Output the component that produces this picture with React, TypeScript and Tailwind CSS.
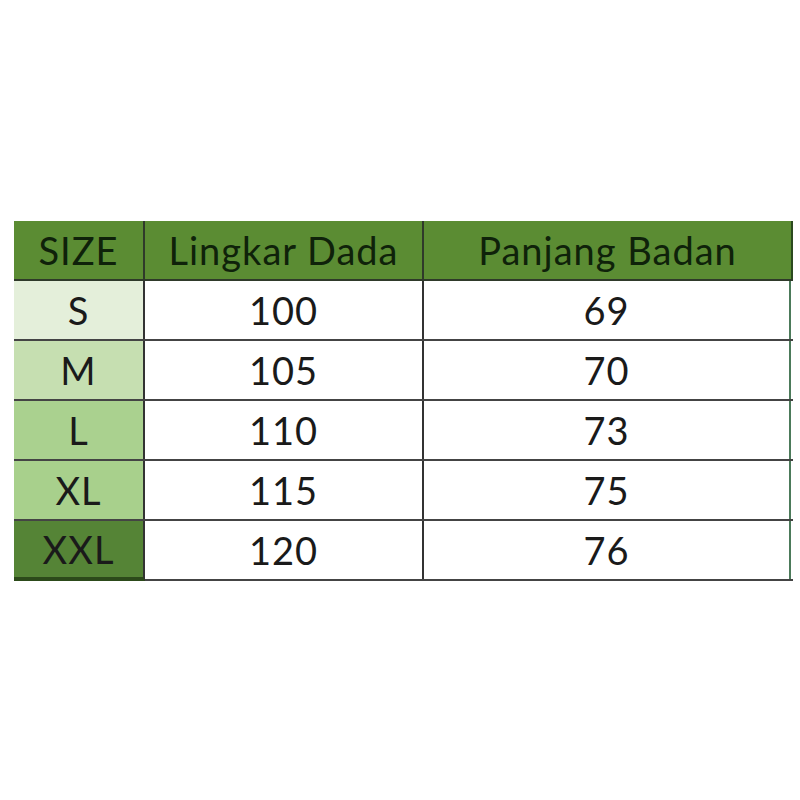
const rows = [
  { size: "S", chest: "100", length: "69", bg: "bg-[#e4efda]" },
  { size: "M", chest: "105", length: "70", bg: "bg-[#c6dfb1]" },
  { size: "L", chest: "110", length: "73", bg: "bg-[#aad18f]" },
  { size: "XL", chest: "115", length: "75", bg: "bg-[#a8d08c]" },
  { size: "XXL", chest: "120", length: "76", bg: "bg-[#558436]" },
];

export default function App() {
  return (
    <div className="h-[800px] w-[800px] bg-white pl-[14px] pt-[221px] font-['Lato',sans-serif]">
      <div className="w-[779px]">
        <div className="flex h-[60px] border-b-2 border-[#2f3a2a] bg-[#5b8c33] text-[38px] tracking-[1px] text-[#0f220a]">
          <div className="flex w-[131px] items-center justify-center border-r-2 border-[#2f3a2a]">SIZE</div>
          <div className="flex w-[279px] items-center justify-center border-r-2 border-[#2f3a2a]">Lingkar Dada</div>
          <div className="flex flex-1 items-center justify-center border-r-2 border-[#2b4a1f]">Panjang Badan</div>
        </div>
        {rows.map((r, i) => (
          <div key={r.size} className="flex h-[60px] border-b-2 border-[#444] text-[38px] tracking-[1px] text-[#1a1a1a]">
            <div
              className={`flex w-[131px] items-center justify-center border-r-2 border-[#333] ${r.bg} ${
                i === rows.length - 1 ? "-mb-[2px] border-b-4 border-b-[#2c4a1a]" : ""
              }`}
            >
              {r.size}
            </div>
            <div className="flex w-[279px] items-center justify-center border-r-2 border-[#333]">{r.chest}</div>
            <div className="mr-[2px] flex flex-1 items-center justify-center border-r-2 border-[#4c7a5a]">{r.length}</div>
          </div>
        ))}
      </div>
    </div>
  );
}
